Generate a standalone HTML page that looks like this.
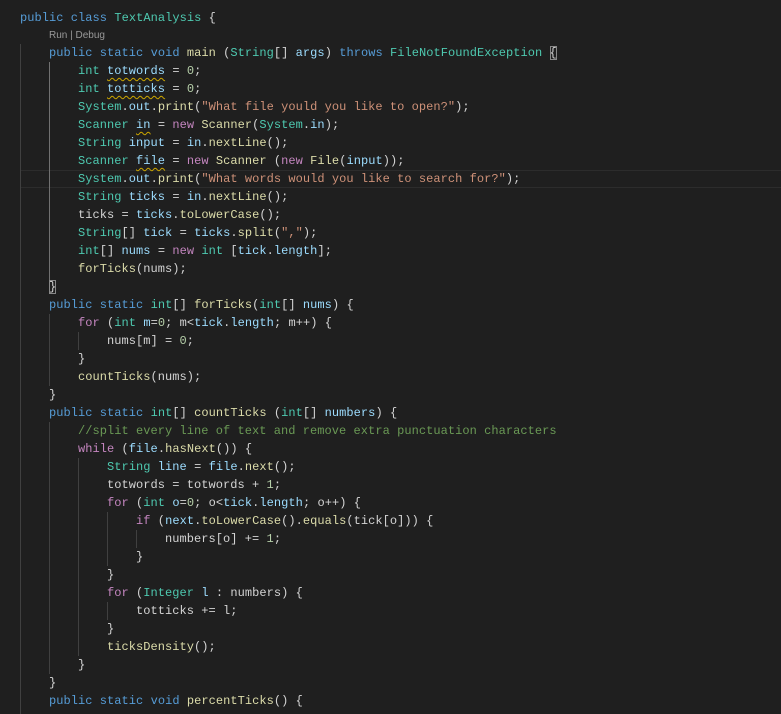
<!DOCTYPE html>
<html><head><meta charset="utf-8"><style>
html,body{margin:0;padding:0;background:#1f1f1f;width:781px;height:713px;overflow:hidden}
#w{position:absolute;left:0;top:1px;width:781px;height:713px}
.l{position:absolute;left:20px;height:18px;line-height:18px;font-family:"Liberation Mono",monospace;font-size:12px;letter-spacing:0.05px;white-space:pre;color:#d4d4d4}
.k{color:#569cd6}.t{color:#4ec9b0}.v{color:#9cdcfe}.f{color:#dcdcaa}.s{color:#ce9178}.n{color:#b5cea8}.c{color:#c586c0}.m{color:#6a9955}
.w{text-decoration:underline wavy #cca700;text-decoration-thickness:1px;text-underline-offset:3px}
.g{position:absolute;width:1px;background:#404040}
.b{outline:1px solid #888;outline-offset:-1px}
.lens{position:absolute;left:49px;top:29px;font-family:"Liberation Sans",sans-serif;font-size:10px;color:#999}
</style></head><body><div id="w">
<div style="position:absolute;left:20px;top:169px;width:761px;height:16px;border:1px solid #2c2c2c;border-left:none;border-right:none"></div>
<div class="g" style="left:20px;top:43px;height:670px"></div>
<div class="g" style="left:49px;top:61px;height:225px;background:#707070"></div>
<div class="g" style="left:49px;top:313px;height:72px"></div>
<div class="g" style="left:49px;top:421px;height:252px"></div>
<div class="g" style="left:78px;top:331px;height:18px"></div>
<div class="g" style="left:78px;top:457px;height:198px"></div>
<div class="g" style="left:107px;top:511px;height:54px"></div>
<div class="g" style="left:107px;top:601px;height:18px"></div>
<div class="g" style="left:136px;top:529px;height:18px"></div>
<div class="l" style="top:8px"><span class="k">public</span> <span class="k">class</span> <span class="t">TextAnalysis</span> {</div>
<div class="lens">Run | Debug</div>
<div class="l" style="top:43px">    <span class="k">public</span> <span class="k">static</span> <span class="k">void</span> <span class="f">main</span> (<span class="t">String</span>[] <span class="v">args</span>) <span class="k">throws</span> <span class="t">FileNotFoundException</span> <span class="b">{</span></div>
<div class="l" style="top:61px">        <span class="t">int</span> <span class="v w">totwords</span> = <span class="n">0</span>;</div>
<div class="l" style="top:79px">        <span class="t">int</span> <span class="v w">totticks</span> = <span class="n">0</span>;</div>
<div class="l" style="top:97px">        <span class="t">System</span>.<span class="v">out</span>.<span class="f">print</span>(<span class="s">"What file yould you like to open?"</span>);</div>
<div class="l" style="top:115px">        <span class="t">Scanner</span> <span class="v w">in</span> = <span class="c">new</span> <span class="f">Scanner</span>(<span class="t">System</span>.<span class="v">in</span>);</div>
<div class="l" style="top:133px">        <span class="t">String</span> <span class="v">input</span> = <span class="v">in</span>.<span class="f">nextLine</span>();</div>
<div class="l" style="top:151px">        <span class="t">Scanner</span> <span class="v w">file</span> = <span class="c">new</span> <span class="f">Scanner</span> (<span class="c">new</span> <span class="f">File</span>(<span class="v">input</span>));</div>
<div class="l" style="top:169px">        <span class="t">System</span>.<span class="v">out</span>.<span class="f">print</span>(<span class="s">"What words would you like to search for?"</span>);</div>
<div class="l" style="top:187px">        <span class="t">String</span> <span class="v">ticks</span> = <span class="v">in</span>.<span class="f">nextLine</span>();</div>
<div class="l" style="top:205px">        ticks = <span class="v">ticks</span>.<span class="f">toLowerCase</span>();</div>
<div class="l" style="top:223px">        <span class="t">String</span>[] <span class="v">tick</span> = <span class="v">ticks</span>.<span class="f">split</span>(<span class="s">","</span>);</div>
<div class="l" style="top:241px">        <span class="t">int</span>[] <span class="v">nums</span> = <span class="c">new</span> <span class="t">int</span> [<span class="v">tick</span>.<span class="v">length</span>];</div>
<div class="l" style="top:259px">        <span class="f">forTicks</span>(nums);</div>
<div class="l" style="top:277px">    <span class="b">}</span></div>
<div class="l" style="top:295px">    <span class="k">public</span> <span class="k">static</span> <span class="t">int</span>[] <span class="f">forTicks</span>(<span class="t">int</span>[] <span class="v">nums</span>) {</div>
<div class="l" style="top:313px">        <span class="c">for</span> (<span class="t">int</span> <span class="v">m</span>=<span class="n">0</span>; m&lt;<span class="v">tick</span>.<span class="v">length</span>; m++) {</div>
<div class="l" style="top:331px">            nums[m] = <span class="n">0</span>;</div>
<div class="l" style="top:349px">        }</div>
<div class="l" style="top:367px">        <span class="f">countTicks</span>(nums);</div>
<div class="l" style="top:385px">    }</div>
<div class="l" style="top:403px">    <span class="k">public</span> <span class="k">static</span> <span class="t">int</span>[] <span class="f">countTicks</span> (<span class="t">int</span>[] <span class="v">numbers</span>) {</div>
<div class="l" style="top:421px">        <span class="m">//split every line of text and remove extra punctuation characters</span></div>
<div class="l" style="top:439px">        <span class="c">while</span> (<span class="v">file</span>.<span class="f">hasNext</span>()) {</div>
<div class="l" style="top:457px">            <span class="t">String</span> <span class="v">line</span> = <span class="v">file</span>.<span class="f">next</span>();</div>
<div class="l" style="top:475px">            totwords = totwords + <span class="n">1</span>;</div>
<div class="l" style="top:493px">            <span class="c">for</span> (<span class="t">int</span> <span class="v">o</span>=<span class="n">0</span>; o&lt;<span class="v">tick</span>.<span class="v">length</span>; o++) {</div>
<div class="l" style="top:511px">                <span class="c">if</span> (<span class="v">next</span>.<span class="f">toLowerCase</span>().<span class="f">equals</span>(tick[o])) {</div>
<div class="l" style="top:529px">                    numbers[o] += <span class="n">1</span>;</div>
<div class="l" style="top:547px">                }</div>
<div class="l" style="top:565px">            }</div>
<div class="l" style="top:583px">            <span class="c">for</span> (<span class="t">Integer</span> <span class="v">l</span> : numbers) {</div>
<div class="l" style="top:601px">                totticks += l;</div>
<div class="l" style="top:619px">            }</div>
<div class="l" style="top:637px">            <span class="f">ticksDensity</span>();</div>
<div class="l" style="top:655px">        }</div>
<div class="l" style="top:673px">    }</div>
<div class="l" style="top:691px">    <span class="k">public</span> <span class="k">static</span> <span class="k">void</span> <span class="f">percentTicks</span>() {</div>
</div></body></html>
